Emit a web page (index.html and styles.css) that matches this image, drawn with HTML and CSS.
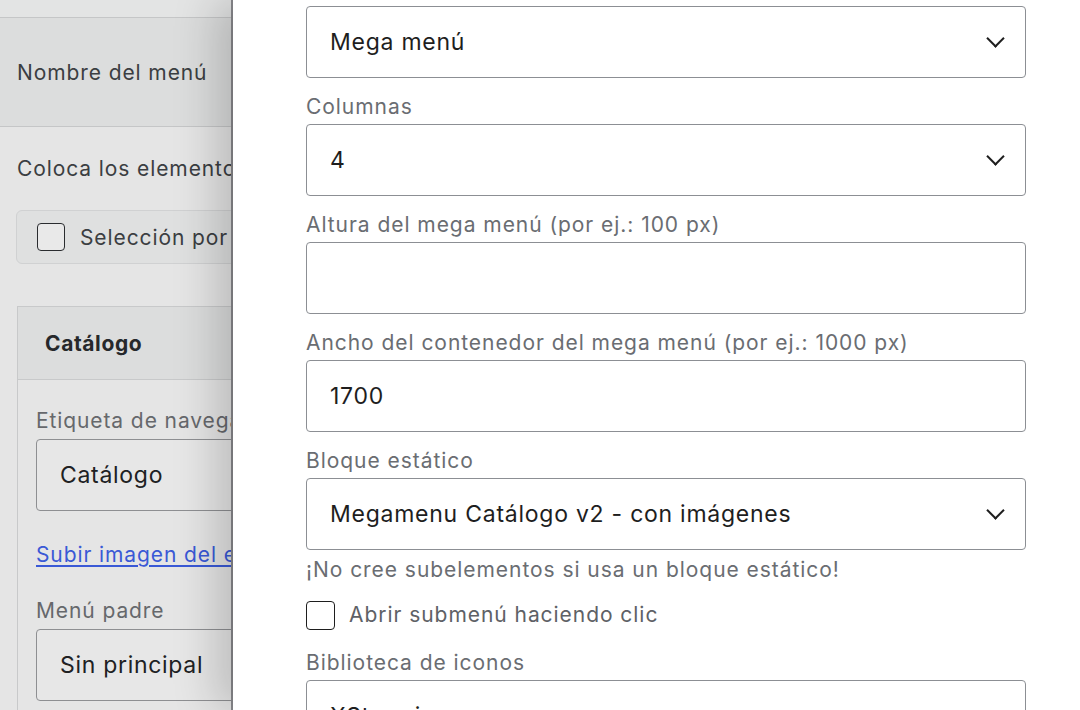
FILE: index.html
```html
<!DOCTYPE html>
<html lang="es">
<head>
  <meta charset="UTF-8">
  <meta name="viewport" content="width=device-width, initial-scale=1.0">
  <title>Menús</title>
  <link rel="stylesheet" href="styles.css">
</head>
<body>
  <div class="screen">
    <!-- menu editor, dimmed behind the drawer -->
    <div class="admin">
      <div class="admin-top"></div>
      <div class="menu-name">Nombre del menú</div>
      <p class="hint">Coloca los elementos del menú en el orden que prefieras.</p>
      <div class="bulk">
        <span class="box"></span>
        <span>Selección por lotes</span>
      </div>

      <div class="item-card">
        <div class="item-head">Catálogo</div>
        <div class="item-body">
          <div class="field-label">Etiqueta de navegación</div>
          <div class="field-box">Catálogo</div>
          <a class="upload" href="#">Subir imagen del elemento</a>
          <div class="field-label">Menú padre</div>
          <div class="field-box">Sin principal</div>
        </div>
      </div>
    </div>

    <!-- item settings drawer -->
    <div class="drawer">
      <div class="form">
        <div class="control select">Mega menú</div>

        <label class="label">Columnas</label>
        <div class="control select">4</div>

        <label class="label">Altura del mega menú (por ej.: 100 px)</label>
        <div class="control"></div>

        <label class="label">Ancho del contenedor del mega menú (por ej.: 1000 px)</label>
        <div class="control">1700</div>

        <label class="label">Bloque estático</label>
        <div class="control select">Megamenu Catálogo v2 - con imágenes</div>
        <p class="note">¡No cree subelementos si usa un bloque estático!</p>

        <div class="check-row">
          <span class="check"></span>
          <span>Abrir submenú haciendo clic</span>
        </div>

        <label class="label label-tight">Biblioteca de iconos</label>
        <div class="control select">XStore icons</div>
      </div>
    </div>
  </div>
</body>
</html>
```

FILE: styles.css
```css
* {
  margin: 0;
  padding: 0;
  box-sizing: border-box;
}

body {
  font-family: "Inter", "Noto Sans", sans-serif;
  background: #ffffff;
  overflow: hidden;
}

.screen {
  display: flex;
  height: 710px;
}

/* ---------- left: menu editor under the overlay ---------- */

.admin {
  width: 233px;
  flex-shrink: 0;
  overflow: hidden;
  white-space: nowrap;
  background: #e5e5e5;
  border-right: 2px solid #8a8a8e;
  color: #3b3e42;
  font-size: 21px;
  letter-spacing: 0.9px;
}

.admin-top {
  height: 18px;
  border-bottom: 1px solid #c5c6c7;
  background: #e3e4e4;
}

.menu-name {
  height: 109px;
  padding-left: 17px;
  display: flex;
  align-items: center;
  background: #dcdddd;
  border-bottom: 1px solid #c5c6c7;
}

.hint {
  padding: 28px 0 0 17px;
  line-height: 28px;
}

.bulk {
  margin: 27px 0 0 16px;
  width: 260px;
  height: 54px;
  display: flex;
  align-items: center;
  gap: 15px;
  padding-left: 20px;
  background: #dfe0e0;
  border: 1px solid #d0d1d2;
  border-radius: 6px;
}

.box {
  width: 28px;
  height: 28px;
  flex-shrink: 0;
  border: 1.5px solid #2a2c2f;
  border-radius: 4px;
  background: #e9e9e9;
}

.item-card {
  margin: 42px 0 0 17px;
  width: 400px;
  border: 1px solid #c8c9ca;
  border-right: none;
}

.item-head {
  height: 73px;
  padding-left: 27px;
  display: flex;
  align-items: center;
  background: #dcdddd;
  border-bottom: 1px solid #c8c9ca;
  font-weight: 700;
  letter-spacing: 0.6px;
  color: #26282b;
}

.item-body {
  padding: 27px 0 10px 18px;
}

.field-label {
  line-height: 28px;
  margin-bottom: 4px;
  color: #66686c;
}

.field-box {
  height: 72px;
  padding-left: 23px;
  display: flex;
  align-items: center;
  border: 1px solid #8e8f92;
  border-radius: 4px;
  background: #e7e7e7;
  font-size: 23px;
  letter-spacing: 0.7px;
  color: #202123;
}

.upload {
  display: block;
  margin: 30px 0 28px;
  line-height: 28px;
  color: #3a59d6;
  text-decoration: underline;
  text-underline-offset: 3px;
}

/* ---------- right: drawer with the mega menu settings ---------- */

.drawer {
  flex: 1;
  background: #ffffff;
  box-shadow: -18px 0 40px rgba(0, 0, 0, 0.18);
  padding: 6px 0 0 73px;
}

.form {
  width: 720px;
  display: flex;
  flex-direction: column;
  font-size: 21px;
  letter-spacing: 0.95px;
}

.label {
  margin: 15px 0 3px;
  line-height: 28px;
  color: #6a6d72;
}

.label-tight {
  margin-top: 19px;
}

.control {
  height: 72px;
  flex-shrink: 0;
  padding: 0 23px;
  display: flex;
  align-items: center;
  border: 1px solid #8c8f94;
  border-radius: 4px;
  font-size: 23px;
  letter-spacing: 0.75px;
  color: #1e1e1e;
  position: relative;
}

/* chevron on the right of each select */
.select::after {
  content: "";
  position: absolute;
  right: 23px;
  top: 25px;
  width: 11px;
  height: 11px;
  border-right: 2.5px solid #1e1e1e;
  border-bottom: 2.5px solid #1e1e1e;
  transform: rotate(45deg);
}

.note {
  margin-top: 6px;
  line-height: 28px;
  color: #6a6d72;
}

.check-row {
  margin-top: 16px;
  display: flex;
  align-items: center;
  gap: 14px;
  line-height: 30px;
  color: #5e6166;
}

.check {
  width: 29px;
  height: 29px;
  flex-shrink: 0;
  border: 1.5px solid #1e1e1e;
  border-radius: 4px;
}
```
